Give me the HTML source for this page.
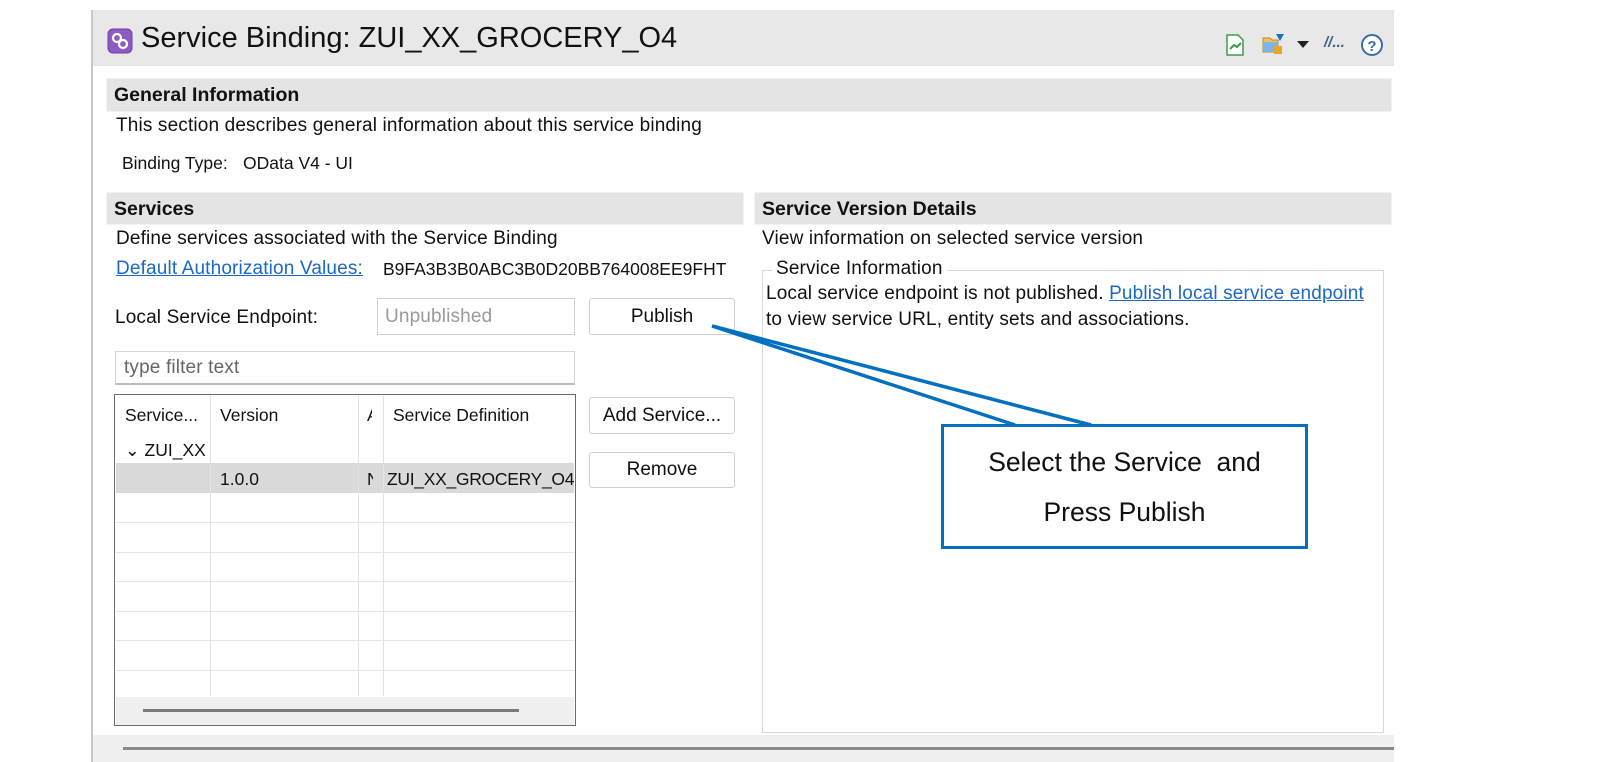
<!DOCTYPE html>
<html><head><meta charset="utf-8"><style>
*{margin:0;padding:0;box-sizing:border-box}
body{width:1600px;height:762px;background:#fff;position:relative;overflow:hidden;font-family:"Liberation Sans",sans-serif;color:#111}
.a{position:absolute;white-space:nowrap}
.t{font-size:19px;line-height:20px;letter-spacing:0.15px}
.tt{font-size:17.5px;line-height:20px}
.hdr{position:absolute;background:#e4e4e4;border:1px solid #f2f2f2}
.hdr span{position:absolute;left:7px;top:5px;font-weight:bold;font-size:19.5px}
.btn{position:absolute;border:1px solid #cfcfcf;border-radius:3px;background:#fff;font-size:19px;text-align:center}
.link{color:#1b68c9;text-decoration:underline}
.vl{position:absolute;width:1px;background:#e2e2e2}
.hl{position:absolute;height:1px;background:#e6e6e6;left:116px;width:458px}
</style></head><body>
<div class="a" style="left:91px;top:10px;width:2px;height:752px;background:#c8c8c8"></div>
<div class="a" style="left:93px;top:10px;width:1301px;height:56px;background:#e8e8e8"></div>
<div class="a" style="left:93px;top:66px;width:1301px;height:669px;background:#fff"></div>
<div class="a" style="left:93px;top:735px;width:1301px;height:27px;background:#f0f0f0"></div>
<div class="a" style="left:123px;top:747px;width:1271px;height:3px;background:#8a8a8a"></div>

<svg class="a" style="left:107px;top:28px" width="26" height="26" viewBox="0 0 26 26">
<rect x="1" y="1" width="24" height="24" rx="5" fill="#8a5cc4" stroke="#6a3fa6"/>
<circle cx="10" cy="10" r="4" fill="none" stroke="#fff" stroke-width="2.2"/>
<circle cx="16" cy="16" r="4" fill="none" stroke="#fff" stroke-width="2.2"/>
</svg>
<div class="a" style="left:141px;top:21px;font-size:29px;line-height:34px">Service Binding: ZUI_XX_GROCERY_O4</div>

<svg class="a" style="left:1226px;top:34px" width="18" height="22" viewBox="0 0 18 22"><path d="M1 1h11l5 5v15H1z" fill="#fff" stroke="#3a9a4a" stroke-width="1.5"/><path d="M4 15l4-4 3 2 4-4" fill="none" stroke="#3a9a4a" stroke-width="2"/></svg>
<svg class="a" style="left:1262px;top:32px" width="24" height="24" viewBox="0 0 24 24"><path d="M1 6h7l2 2h6v12H1z" fill="#f1c45a" stroke="#b88a2a"/><path d="M2 10h14v10H2z" fill="#7fb5e5"/><path d="M14 2h8l-4 7z" fill="#1e6fc8"/><path d="M12 14h8v8h-8z" fill="#e8a52a"/></svg>
<svg class="a" style="left:1297px;top:41px" width="12" height="8"><path d="M0 0h12L6 7z" fill="#222"/></svg>
<div class="a" style="left:1324px;top:34px;font-size:15px;color:#3d5f88;font-style:italic;font-weight:bold">//...</div>
<svg class="a" style="left:1360px;top:33px" width="24" height="24" viewBox="0 0 24 24"><circle cx="12" cy="12" r="10" fill="#fff" stroke="#3a6ea8" stroke-width="2"/><text x="12" y="18" text-anchor="middle" font-family="Liberation Sans" font-weight="bold" font-size="15" fill="#3a6ea8">?</text></svg>

<div class="hdr" style="left:106px;top:78px;width:1286px;height:34px"><span>General Information</span></div>
<div class="a t" style="left:116px;top:116px">This section describes general information about this service binding</div>
<div class="a tt" style="left:122px;top:153px">Binding Type:</div>
<div class="a tt" style="left:243px;top:153px">OData V4 - UI</div>

<div class="hdr" style="left:106px;top:192px;width:638px;height:33px"><span>Services</span></div>
<div class="hdr" style="left:754px;top:192px;width:638px;height:33px"><span>Service Version Details</span></div>
<div class="a t" style="left:116px;top:229px">Define services associated with the Service Binding</div>
<div class="a t link" style="left:116px;top:259px">Default Authorization Values:</div>
<div class="a t" style="left:383px;top:259px;font-size:17.5px;letter-spacing:0">B9FA3B3B0ABC3B0D20BB764008EE9FHT</div>
<div class="a t" style="left:115px;top:308px">Local Service Endpoint:</div>
<div class="a" style="left:377px;top:298px;width:198px;height:37px;border:1px solid #cfcfcf"></div>
<div class="a t" style="left:385px;top:307px;color:#9a9a9a">Unpublished</div>
<div class="btn" style="left:589px;top:298px;width:146px;height:37px;line-height:35px">Publish</div>

<div class="a" style="left:115px;top:351px;width:460px;height:34px;border:1px solid #d6d6d6;border-bottom:2px solid #bdbdbd"></div>
<div class="a t" style="left:124px;top:358px;color:#666">type filter text</div>

<div class="a" style="left:114px;top:394px;width:462px;height:332px;border:1.5px solid #6a6a6a;background:#fff"></div>
<div class="a" style="left:116px;top:463px;width:458px;height:30px;background:#dadada"></div>
<div class="vl" style="left:210px;top:396px;height:300px"></div>
<div class="vl" style="left:358px;top:396px;height:300px"></div>
<div class="vl" style="left:383px;top:396px;height:300px"></div>
<div class="hl" style="top:522px"></div><div class="hl" style="top:552px"></div><div class="hl" style="top:581px"></div><div class="hl" style="top:611px"></div><div class="hl" style="top:640px"></div><div class="hl" style="top:670px"></div>
<div class="a" style="left:116px;top:697px;width:458px;height:28px;background:#f0f0f0"></div>
<div class="a" style="left:143px;top:709px;width:376px;height:3px;background:#7a7a7a"></div>
<div class="a tt" style="left:125px;top:405px;width:84px;overflow:hidden">Service...</div>
<div class="a tt" style="left:220px;top:405px">Version</div>
<div class="a tt" style="left:367px;top:405px;width:5px;overflow:hidden">A</div>
<div class="a tt" style="left:393px;top:405px">Service Definition</div>
<div class="a tt" style="left:125px;top:440px;width:85px;overflow:hidden">⌄ ZUI_XX</div>
<div class="a tt" style="left:220px;top:469px">1.0.0</div>
<div class="a tt" style="left:367px;top:469px;width:6px;overflow:hidden">N</div>
<div class="a tt" style="left:387px;top:469px;width:187px;overflow:hidden;letter-spacing:-0.3px">ZUI_XX_GROCERY_O4</div>

<div class="btn" style="left:589px;top:397px;width:146px;height:37px;line-height:35px">Add Service...</div>
<div class="btn" style="left:589px;top:452px;width:146px;height:36px;line-height:34px">Remove</div>

<div class="a t" style="left:762px;top:229px">View information on selected service version</div>
<div class="a" style="left:762px;top:270px;width:622px;height:463px;border:1px solid #d8d8d8"></div>
<div class="a t" style="left:772px;top:259px;background:#fff;padding:0 4px">Service Information</div>
<div class="a t" style="left:766px;top:284px">Local service endpoint is not published. <span class="link">Publish local service endpoint</span></div>
<div class="a t" style="left:766px;top:310px">to view service URL, entity sets and associations.</div>

<svg class="a" style="left:0;top:0" width="1600" height="762"><polyline points="1015,425 712,326 1091,425" fill="none" stroke="#0070c0" stroke-width="3.5"/></svg>
<div class="a" style="left:941px;top:424px;width:367px;height:125px;border:3.5px solid #0070c0;background:#fff"></div>
<div class="a" style="left:941px;top:447px;width:367px;text-align:center;font-size:26.5px;line-height:30px">Select the Service&nbsp; and</div>
<div class="a" style="left:941px;top:497px;width:367px;text-align:center;font-size:26.5px;line-height:30px">Press Publish</div>
</body></html>
